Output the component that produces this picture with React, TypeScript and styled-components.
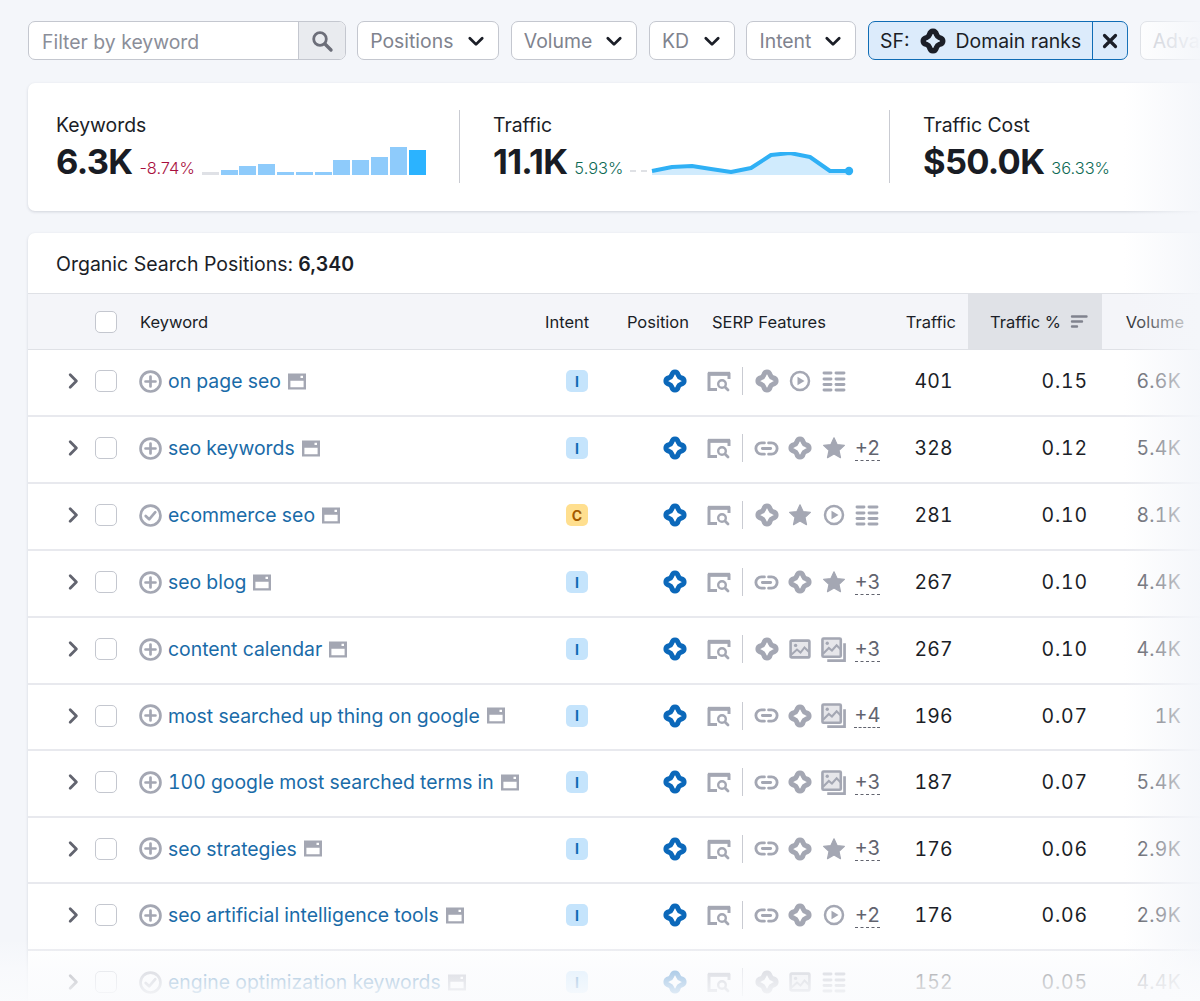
import React from "react";
import styled, { createGlobalStyle } from "styled-components";

const Global = createGlobalStyle`
  html, body { margin: 0; padding: 0; height: 1001px; overflow: hidden; background: #f4f6fa; }
  body { font-family: Inter, "Liberation Sans", sans-serif; color: #1b1e27; }
  #root { height: 1001px; }
`;

const Page = styled.div`
  position: relative; width: 1200px; height: 1001px; overflow: hidden;
  padding: 21px 0 0 28px; box-sizing: border-box;
`;
const RightFade = styled.div`
  position: absolute; top: 0; right: 0; bottom: 0; width: 76px; pointer-events: none;
  background: linear-gradient(90deg, rgba(244,246,250,0), rgba(244,246,250,.95));
`;
const BottomFade = styled.div`
  position: absolute; left: 0; right: 0; bottom: 0; height: 62px; pointer-events: none;
  background: linear-gradient(180deg, rgba(250,251,253,0), rgba(250,251,253,.68) 50%, rgba(250,251,253,.95));
`;

const Toolbar = styled.div`display: flex; gap: 11.6px; height: 39px; width: 1300px;`;
const SearchBox = styled.div`
  display: flex; width: 317.6px; box-sizing: border-box; border: 1px solid #c4c7cf; border-radius: 7px;
  background: #fff; overflow: hidden;
`;
const SearchInput = styled.div`flex: 1; display: flex; align-items: center; padding: 2px 0 0 13px; font-size: 19.4px; color: #8b8e99;`;
const SearchBtn = styled.div`
  width: 46px; display: flex; align-items: center; justify-content: center;
  background: #e9ebef; border-left: 1px solid #c4c7cf; color: #6c6e79;
`;
const Drop = styled.div<{ $w: number; $faded?: boolean }>`
  width: ${p => p.$w}px; box-sizing: border-box; display: flex; align-items: center; justify-content: space-between;
  padding: 0 13px 0 12px; background: #fff; border: 1px solid ${p => p.$faded ? "#d9dce2" : "#c4c7cf"}; border-radius: 7px;
  font-size: 19.4px; color: ${p => p.$faded ? "#c4c7cf" : "#80838e"};
`;
const Chip = styled.div`
  width: 260px; box-sizing: border-box; display: flex; background: #dcebfb; border: 1px solid #0f6cb5;
  border-radius: 7px; color: #1b1e27; font-size: 19.4px;
`;
const ChipMain = styled.div`
  flex: 1; display: flex; align-items: center; gap: 9px; padding-left: 11px; border-right: 1px solid #0f6cb5;
`;
const ChipClose = styled.div`width: 34px; display: flex; align-items: center; justify-content: center;`;

const Card = styled.section`
  background: #fff; width: 1240px; border-radius: 7px; box-shadow: 0 1px 3px rgba(25,35,60,.16);
`;
const Metrics = styled(Card)`
  display: flex; margin-top: 23px; height: 128px; box-sizing: border-box; padding-top: 27px;
`;
const Metric = styled.div<{ $w: number; $pad: number; $line?: boolean }>`
  width: ${p => p.$w}px; height: 73px; box-sizing: border-box; padding-left: ${p => p.$pad}px;
  border-right: ${p => p.$line ? "1px solid #c9cbd2" : "0"};
`;
const MetricLabel = styled.div`font-size: 19.4px; line-height: 28px; padding-top: 1px; color: #1b1e27;`;
const MetricRow = styled.div`display: flex; align-items: flex-end; height: 40px; margin-top: 3px;`;
const MetricValue = styled.div`font-size: 34.5px; font-weight: 700; letter-spacing: -.7px; line-height: 40px; color: #191c24;`;
const Delta = styled.div<{ $up?: boolean }>`
  font-size: 16.4px; font-weight: 300; line-height: 20px; margin: 0 6px 4px 7px; color: ${p => p.$up ? "#0e6a55" : "#a80f3e"};
`;
const Bars = styled.div`display: flex; align-items: flex-end; gap: 1.8px; height: 28px; margin-bottom: 7px; margin-left: 1px;`;
const Bar = styled.div<{ $h: number; $tone: string }>`width: 17px; height: ${p => p.$h}px; background: ${p => p.$tone};`;
const Spark = styled.svg`display: block; margin-left: 1px; margin-bottom: 3px;`;

const Table = styled(Card)`margin-top: 22px; height: 900px;`;
const TableTitle = styled.div`
  height: 61px; display: flex; align-items: center; padding: 1px 0 0 28px; font-size: 19.5px; color: #1b1e27;
  border-bottom: 1px solid #dfe1e6; box-sizing: border-box; b { font-weight: 600; margin-left: 5px; }
`;
const grid = `display: grid; grid-template-columns: 67px 44px 396px 84px 80px 181px 88px 134px 94px;`;
const HeadRow = styled.div`
  ${grid} height: 56px; background: #f4f5f9; border-bottom: 1px solid #dfe1e6; box-sizing: border-box;
  font-size: 16.5px; color: #1b1e27;
`;
const HeadCell = styled.div<{ $align?: string; $pad?: number; $active?: boolean }>`
  display: flex; align-items: center; gap: 9px; justify-content: ${p => p.$align || "flex-start"};
  padding: 0 ${p => p.$align === "flex-end" ? p.$pad ?? 0 : 0}px 0 ${p => p.$align === "flex-end" ? 0 : p.$pad ?? 0}px;
  background: ${p => p.$active ? "#e0e2e7" : "transparent"};
`;
const Row = styled.div<{ $h: number }>`
  ${grid} height: ${p => p.$h}px; border-bottom: 2px solid #e8e9ee; box-sizing: border-box; padding-bottom: 3px;
  align-items: center; font-size: 19.4px;
`;
const Expand = styled.div`display: flex; justify-content: flex-end; padding-right: 13px; color: #62646f;`;
const Check = styled.div`width: 22px; height: 22px; box-sizing: border-box; border: 1px solid #c4c7cf; border-radius: 5px; background: #fff;`;
const KeywordCell = styled.div`display: flex; align-items: center; color: #1a6ba8;`;
const KeywordText = styled.span`margin: 0 7px 0 6px; white-space: nowrap; font-variant-numeric: tabular-nums;`;
const IconWrap = styled.span`display: inline-flex; color: #a4a7b3;`;
const Center = styled.div`display: flex; justify-content: center;`;
const Badge = styled.div<{ $c?: boolean }>`
  width: 22px; height: 22px; border-radius: 5px; display: flex; align-items: center; justify-content: center;
  font-size: 14px; font-weight: 700; background: ${p => p.$c ? "#ffdf8f" : "#c5e4fc"}; color: ${p => p.$c ? "#a45a00" : "#0f6cb5"};
`;
const PosCell = styled.div`display: flex; justify-content: flex-end; padding-right: 11px; color: #0b68ba;`;
const Serp = styled.div`display: flex; align-items: center; padding-left: 8px; color: #a4a7b3; svg { flex: none; }`;
const Sep = styled.div`flex: none; width: 1px; height: 28px; background: #c9cbd2; margin: 0 7px 0 11px;`;
const Slot = styled.div`flex: none; width: 33.5px; display: flex; justify-content: center;`;
const More = styled.span`
  font-size: 20px; line-height: 21px; color: #62646f; border-bottom: 1px dashed #62646f; padding-bottom: 1px; margin-top: 2px;
`;
const Num = styled.div<{ $pad: number; $ls: number; $muted?: boolean }>`
  text-align: right; padding-right: ${p => p.$pad}px; letter-spacing: ${p => p.$ls}px; font-variant-numeric: tabular-nums;
  color: ${p => p.$muted ? "#4f525c" : "#1b1e27"};
`;

const Diamond = ({ size = 26, sw = 4.6 }: { size?: number; sw?: number }) => (
  <svg width={size} height={size} viewBox="0 0 24 24" fill="none" stroke="currentColor" strokeWidth={sw} strokeLinejoin="round">
    <path d="M12 3.6C13.6 3.6 14.6 5 15 6.6C15.5 8 16 8.5 17.4 9C19 9.4 20.4 10.4 20.4 12C20.4 13.6 19 14.6 17.4 15C16 15.5 15.5 16 15 17.4C14.6 19 13.6 20.4 12 20.4C10.4 20.4 9.4 19 9 17.4C8.5 16 8 15.5 6.6 15C5 14.6 3.6 13.6 3.6 12C3.6 10.4 5 9.4 6.6 9C8 8.5 8.5 8 9 6.6C9.4 5 10.4 3.6 12 3.6Z" />
  </svg>
);
const Chevron = ({ dir = "down", color = "#1b1e27", size = 18 }: { dir?: "down" | "right"; color?: string; size?: number }) => (
  <svg width={size} height={size} viewBox="0 0 16 16" fill="none" stroke={color} strokeWidth="2.5" strokeLinecap="round" strokeLinejoin="round">
    <path d={dir === "down" ? "M2.5 5.5L8 11L13.5 5.5" : "M5.5 2.5L11 8L5.5 13.5"} />
  </svg>
);
const SearchGlass = () => (
  <svg width="24" height="24" viewBox="0 0 24 24" fill="none" stroke="currentColor" strokeWidth="2.8" strokeLinecap="round">
    <circle cx="10" cy="10" r="6.3" /><path d="M15 15L21 21" strokeWidth="3.4" />
  </svg>
);
const Cross = () => (
  <svg width="16" height="16" viewBox="0 0 16 16" stroke="#1b1e27" strokeWidth="3.2" strokeLinecap="round"><path d="M2.5 2.5L13.5 13.5M13.5 2.5L2.5 13.5" /></svg>
);
const PlusCircle = () => (
  <svg width="23" height="23" viewBox="0 0 24 24" fill="none" stroke="currentColor" strokeWidth="2.8" strokeLinecap="round">
    <circle cx="12" cy="12" r="10.4" /><path d="M12 6.8V17.2M6.8 12H17.2" />
  </svg>
);
const CheckCircle = () => (
  <svg width="23" height="23" viewBox="0 0 24 24" fill="none" stroke="currentColor" strokeWidth="2.8" strokeLinecap="round" strokeLinejoin="round">
    <circle cx="12" cy="12" r="10.4" /><path d="M7 12.5L10.6 16L17 8.5" />
  </svg>
);
const PageIcon = () => (
  <svg width="18" height="17" viewBox="0 0 18 17">
    <path fillRule="evenodd" fill="currentColor" d="M0 0.5H18V16.5H0ZM2.4 7.8V14.2H15.6V7.8ZM12.5 2.8V5H15V2.8Z" />
  </svg>
);
const SerpBox = () => (
  <svg width="24" height="22" viewBox="0 0 24 22" fill="none" stroke="currentColor">
    <path d="M10 19.4H2V4.2H22V9" strokeWidth="3" /><path d="M1 3.6H23" strokeWidth="3.6" />
    <circle cx="15" cy="14" r="3.8" strokeWidth="2.4" /><path d="M18 17L21 20" strokeWidth="2.8" strokeLinecap="round" />
  </svg>
);
const LinkIcon = () => (
  <svg width="25" height="25" viewBox="0 0 24 24" fill="none" stroke="currentColor" strokeWidth="2.7" strokeLinecap="round">
    <path d="M10 6.6H7.2a5.4 5.4 0 0 0 0 10.8H10M14 6.6h2.8a5.4 5.4 0 0 1 0 10.8H14M8 12h8" />
  </svg>
);
const Star = () => (
  <svg width="24" height="24" viewBox="0 0 24 24" fill="currentColor" stroke="currentColor" strokeWidth="1.2" strokeLinejoin="round">
    <path d="M12 1.8L15.1 8.6L22.4 9.4L17 14.4L18.5 21.7L12 18L5.5 21.7L7 14.4L1.6 9.4L8.9 8.6Z" />
  </svg>
);
const Play = () => (
  <svg width="22" height="22" viewBox="0 0 22 22" fill="none" stroke="currentColor" strokeWidth="2.5">
    <circle cx="11" cy="11" r="9" /><path d="M8.5 6.8L15.5 11L8.5 15.2Z" fill="currentColor" stroke="none" />
  </svg>
);
const ListIcon = () => (
  <svg width="24" height="22" viewBox="0 0 24 22" stroke="currentColor" strokeWidth="2.9" strokeLinecap="round" fill="none">
    <path d="M2 3H9M14 3H22M2 9H9M14 9H22M2 14.5H9M14 14.5H22M2 20H9M14 20H22" />
  </svg>
);
const ImageIcon = () => (
  <svg width="22" height="20" viewBox="0 0 22 20" fill="none" stroke="currentColor" strokeWidth="2.6">
    <rect x="1.6" y="1.6" width="18.8" height="16.8" rx="1" fill="currentColor" fillOpacity=".28" />
    <circle cx="6.6" cy="6.4" r="1.7" fill="currentColor" stroke="none" />
    <path d="M2 16L8 10.5L11.5 13.5L15.5 8.5L20 13" strokeWidth="2" />
  </svg>
);
const ImagesIcon = () => (
  <svg width="25" height="25" viewBox="0 0 24 24" fill="none" stroke="currentColor" strokeWidth="2.5">
    <rect x="1.4" y="1.4" width="17.6" height="17.6" rx="1" fill="currentColor" fillOpacity=".28" />
    <circle cx="6" cy="6" r="1.6" fill="currentColor" stroke="none" />
    <path d="M2 16L7.5 10.5L10.5 13L15 8L19 12" strokeWidth="2" /><path d="M22.6 6V22.6H6" strokeWidth="2.6" />
  </svg>
);

const sfIcons: Record<string, React.ReactNode> = {
  d: <Diamond />, p: <Play />, l: <ListIcon />, k: <LinkIcon />, s: <Star />, i: <ImageIcon />, m: <ImagesIcon />,
};

type R = { kw: string; check?: boolean; c?: boolean; icons: string; more?: number; t: number; pct: string; vol: string; h: number };
const rows: R[] = [
  { kw: "on page seo", icons: "dpl", t: 401, pct: "0.15", vol: "6.6K", h: 67 },
  { kw: "seo keywords", icons: "kds", more: 2, t: 328, pct: "0.12", vol: "5.4K", h: 67 },
  { kw: "ecommerce seo", check: true, c: true, icons: "dspl", t: 281, pct: "0.10", vol: "8.1K", h: 67 },
  { kw: "seo blog", icons: "kds", more: 3, t: 267, pct: "0.10", vol: "4.4K", h: 67 },
  { kw: "content calendar", icons: "dim", more: 3, t: 267, pct: "0.10", vol: "4.4K", h: 67 },
  { kw: "most searched up thing on google", icons: "kdm", more: 4, t: 196, pct: "0.07", vol: "1K", h: 66 },
  { kw: "100 google most searched terms in", icons: "kdm", more: 3, t: 187, pct: "0.07", vol: "5.4K", h: 67 },
  { kw: "seo strategies", icons: "kds", more: 3, t: 176, pct: "0.06", vol: "2.9K", h: 66 },
  { kw: "seo artificial intelligence tools", icons: "kdp", more: 2, t: 176, pct: "0.06", vol: "2.9K", h: 67 },
  { kw: "engine optimization keywords", check: true, icons: "dil", t: 152, pct: "0.05", vol: "4.4K", h: 67 },
];

const barData: [number, string][] = [
  [3, "#dfe1e6"], [5, "#8ecbfb"], [9, "#8ecbfb"], [11, "#8ecbfb"], [3, "#8ecbfb"], [3, "#8ecbfb"], [3, "#8ecbfb"],
  [15, "#8ecbfb"], [15, "#8ecbfb"], [18, "#8ecbfb"], [28, "#8ecbfb"], [25, "#2bb3ff"],
];
const line = "22,19 42,15 62,14 81,17 101,20 121,16 141,3 160,1 180,5 200,19 219,19";

export default function App() {
  return (
    <Page>
      <Global />
      <Toolbar>
        <SearchBox>
          <SearchInput>Filter by keyword</SearchInput>
          <SearchBtn><SearchGlass /></SearchBtn>
        </SearchBox>
        <Drop $w={142}>Positions <Chevron /></Drop>
        <Drop $w={126.5}>Volume <Chevron /></Drop>
        <Drop $w={86}>KD <Chevron /></Drop>
        <Drop $w={110}>Intent <Chevron /></Drop>
        <Chip>
          <ChipMain>SF: <Diamond size={28} sw={4.6} /> Domain ranks</ChipMain>
          <ChipClose><Cross /></ChipClose>
        </Chip>
        <Drop $w={120} $faded>Advanced</Drop>
      </Toolbar>

      <Metrics>
        <Metric $w={432} $pad={28} $line>
          <MetricLabel>Keywords</MetricLabel>
          <MetricRow>
            <MetricValue>6.3K</MetricValue>
            <Delta>-8.74%</Delta>
            <Bars>{barData.map(([h, tone], i) => <Bar key={i} $h={h} $tone={tone} />)}</Bars>
          </MetricRow>
        </Metric>
        <Metric $w={430} $pad={33} $line>
          <MetricLabel>Traffic</MetricLabel>
          <MetricRow>
            <MetricValue>11.1K</MetricValue>
            <Delta $up>5.93%</Delta>
            <Spark width="228" height="27" viewBox="0 0 228 27" fill="none">
              <path d="M0 19H18" stroke="#d5d7dd" strokeWidth="1.5" strokeDasharray="6 5" />
              <polygon points={`22,23 ${line} 219,23`} fill="#d0ebfd" />
              <polyline points={line} stroke="#2fb0f5" strokeWidth="4" strokeLinejoin="round" />
              <circle cx="219" cy="19" r="4.2" fill="#2fb0f5" />
            </Spark>
          </MetricRow>
        </Metric>
        <Metric $w={340} $pad={33}>
          <MetricLabel>Traffic Cost</MetricLabel>
          <MetricRow>
            <MetricValue>$50.0K</MetricValue>
            <Delta $up>36.33%</Delta>
          </MetricRow>
        </Metric>
      </Metrics>

      <Table>
        <TableTitle>Organic Search Positions: <b>6,340</b></TableTitle>
        <HeadRow>
          <div />
          <HeadCell><Check /></HeadCell>
          <HeadCell $pad={1}>Keyword</HeadCell>
          <HeadCell $pad={10}>Intent</HeadCell>
          <HeadCell $align="flex-end" $pad={10}>Position</HeadCell>
          <HeadCell $pad={13}>SERP Features</HeadCell>
          <HeadCell $align="flex-end" $pad={12}>Traffic</HeadCell>
          <HeadCell $align="flex-end" $active $pad={14}>
            Traffic %
            <svg width="18" height="16" viewBox="0 0 18 16" stroke="#80838e" strokeWidth="2.4" strokeLinecap="round"><path d="M2 2.5H16.5M2 7.5H12M2 12.5H7" /></svg>
          </HeadCell>
          <HeadCell $align="flex-end" $pad={12}>Volume</HeadCell>
        </HeadRow>
        {rows.map(r => (
          <Row key={r.kw} $h={r.h}>
            <Expand><Chevron dir="right" color="#62646f" /></Expand>
            <div><Check /></div>
            <KeywordCell>
              <IconWrap>{r.check ? <CheckCircle /> : <PlusCircle />}</IconWrap>
              <KeywordText>{r.kw}</KeywordText>
              <IconWrap><PageIcon /></IconWrap>
            </KeywordCell>
            <Center><Badge $c={r.c}>{r.c ? "C" : "I"}</Badge></Center>
            <PosCell><Diamond /></PosCell>
            <Serp>
              <SerpBox />
              <Sep />
              {r.icons.split("").map((k, i) => <Slot key={i}>{sfIcons[k]}</Slot>)}
              {r.more ? <Slot><More>+{r.more}</More></Slot> : null}
            </Serp>
            <Num $pad={15} $ls={0.3}>{r.t}</Num>
            <Num $pad={14} $ls={0.9}>{r.pct}</Num>
            <Num $pad={15} $ls={0.3} $muted>{r.vol}</Num>
          </Row>
        ))}
      </Table>
      <RightFade />
      <BottomFade />
    </Page>
  );
}
